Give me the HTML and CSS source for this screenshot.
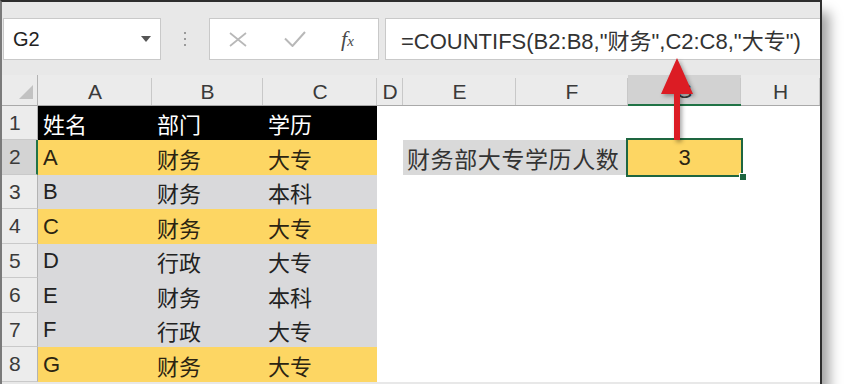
FILE: index.html
```html
<!DOCTYPE html>
<html lang="zh-CN">
<head>
<meta charset="utf-8">
<title>COUNTIFS</title>
<link rel="stylesheet" href="styles.css">
</head>
<body>
<div class="window">
  <div class="formula-bar">
    <div class="name-box"><span>G2</span><span class="dd"></span></div>
    <div class="grip"><i></i><i></i><i></i></div>
    <div class="fx-box">
      <svg class="ico-x" width="18" height="15" viewBox="0 0 18 15"><path d="M1 1 L17 14 M17 1 L1 14" stroke="#b8b8b8" stroke-width="1.7" fill="none"/></svg>
      <svg class="ico-ok" width="22" height="16" viewBox="0 0 22 16"><path d="M1 7.5 L8.5 15 L21 1" stroke="#b8b8b8" stroke-width="2" fill="none"/></svg>
      <span class="fx">f<span class="fx-x">x</span></span>
    </div>
    <div class="formula">=COUNTIFS(B2:B8,"财务",C2:C8,"大专")</div>
  </div>

  <div class="sheet">
    <div class="corner"></div>
    <div class="colh">A</div>
    <div class="colh">B</div>
    <div class="colh">C</div>
    <div class="colh">D</div>
    <div class="colh">E</div>
    <div class="colh">F</div>
    <div class="colh sel">G</div>
    <div class="colh">H</div>

    <div class="rowh">1</div>
    <div class="c k">姓名</div><div class="c k">部门</div><div class="c k">学历</div>
    <div class="c"></div><div class="c"></div><div class="c"></div><div class="c"></div><div class="c"></div>

    <div class="rowh sel">2</div>
    <div class="c y">A</div><div class="c y">财务</div><div class="c y">大专</div>
    <div class="c"></div>
    <div class="c label">财务部大专学历人数</div>
    <div class="c active">3</div>
    <div class="c"></div>

    <div class="rowh">3</div>
    <div class="c g">B</div><div class="c g">财务</div><div class="c g">本科</div>
    <div class="c"></div><div class="c"></div><div class="c"></div><div class="c"></div><div class="c"></div>

    <div class="rowh">4</div>
    <div class="c y">C</div><div class="c y">财务</div><div class="c y">大专</div>
    <div class="c"></div><div class="c"></div><div class="c"></div><div class="c"></div><div class="c"></div>

    <div class="rowh">5</div>
    <div class="c g">D</div><div class="c g">行政</div><div class="c g">大专</div>
    <div class="c"></div><div class="c"></div><div class="c"></div><div class="c"></div><div class="c"></div>

    <div class="rowh">6</div>
    <div class="c g">E</div><div class="c g">财务</div><div class="c g">本科</div>
    <div class="c"></div><div class="c"></div><div class="c"></div><div class="c"></div><div class="c"></div>

    <div class="rowh">7</div>
    <div class="c g">F</div><div class="c g">行政</div><div class="c g">大专</div>
    <div class="c"></div><div class="c"></div><div class="c"></div><div class="c"></div><div class="c"></div>

    <div class="rowh">8</div>
    <div class="c y">G</div><div class="c y">财务</div><div class="c y">大专</div>
    <div class="c"></div><div class="c"></div><div class="c"></div><div class="c"></div><div class="c"></div>
  </div>

  <svg class="arrow" width="60" height="90" viewBox="0 0 60 90">
    <polygon points="27,4 43,40 30,40 30,86 24,86 24,40 11,40" fill="#dc1c24"/>
  </svg>
</div>
</body>
</html>
```

FILE: styles.css
```css
html, body {
  margin: 0;
  padding: 0;
  background: #ffffff;
}

body {
  font-family: "Liberation Sans", "Noto Sans CJK SC", sans-serif;
}

.window {
  position: relative;
  width: 818px;
  height: 382px;
  border-top: 2px solid #2e2e2e;
  border-left: 2px solid #7a7a7a;
  border-right: 2px solid #2e2e2e;
  background: #e8e8e8;
  box-shadow: 7px 12px 12px rgba(0, 0, 0, 0.38);
  overflow: hidden;
}

/* ---------- formula bar ---------- */
.formula-bar {
  display: flex;
  height: 42px;
  padding-top: 16px;
}

.name-box {
  margin-left: 1px;
  width: 158px;
  box-sizing: border-box;
  background: #ffffff;
  border: 1px solid #c9c9c9;
  display: flex;
  align-items: center;
  justify-content: space-between;
  padding: 0 9px 0 9px;
  font-size: 20px;
  color: #222222;
}

.dd {
  width: 0;
  height: 0;
  border-left: 5px solid transparent;
  border-right: 5px solid transparent;
  border-top: 6px solid #555555;
}

.grip {
  width: 48px;
  display: flex;
  flex-direction: column;
  align-items: center;
  justify-content: center;
  gap: 4px;
}

.grip i {
  display: block;
  width: 2px;
  height: 2px;
  background: #9a9a9a;
}

.fx-box {
  width: 170px;
  box-sizing: border-box;
  background: #ffffff;
  border: 1px solid #c9c9c9;
  display: flex;
  align-items: center;
  padding-left: 19px;
}

.ico-ok {
  margin-left: 37px;
}

.fx {
  margin-left: 35px;
  font-family: "Liberation Serif", "DejaVu Serif", serif;
  font-style: italic;
  font-size: 22px;
  color: #4a4a4a;
  line-height: 1;
}

.fx-x {
  font-size: 15px;
}

.formula {
  flex: 1;
  margin-left: 6px;
  background: #ffffff;
  border: 1px solid #c9c9c9;
  border-right: none;
  display: flex;
  align-items: center;
  padding-left: 15px;
  font-size: 22px;
  color: #333333;
  white-space: nowrap;
}

/* ---------- sheet grid ---------- */
.sheet {
  margin-top: 15px;
  display: grid;
  grid-template-columns: 36px 114px 111px 114px 26px 113px 112px 113px 79px;
  grid-template-rows: 31px 34px 35px 34px 35px 34px 35px 34px 35px;
  background: #ffffff;
}

.corner {
  background: #ebebeb;
  border-right: 1px solid #b3b3b3;
  border-bottom: 1px solid #a9a9a9;
  display: flex;
  align-items: flex-end;
  justify-content: flex-end;
  padding: 0 4px 6px 0;
}

.corner::after {
  content: "";
  width: 0;
  height: 0;
  border-left: 14px solid transparent;
  border-bottom: 14px solid #c2c2c2;
}

.colh {
  background-color: #ebebeb;
  background-image: linear-gradient(#c8c8c8, #c8c8c8);
  background-size: 1px calc(100% - 3px);
  background-position: right bottom;
  background-repeat: no-repeat;
  border-bottom: 1px solid #a9a9a9;
  display: flex;
  align-items: center;
  justify-content: center;
  padding-top: 3px;
  font-size: 21px;
  color: #3a3a3a;
}

.colh.sel {
  background-color: #d2d2d2;
  border-bottom: 2px solid #217346;
}

.rowh {
  background: #ececec;
  border-right: 1px solid #b3b3b3;
  border-bottom: 1px solid #c9c9c9;
  display: flex;
  align-items: center;
  padding-left: 7px;
  font-size: 21px;
  color: #3a3a3a;
}

.rowh.sel {
  background: #d3d3d3;
  border-right: 2px solid #217346;
}

.c {
  display: flex;
  align-items: center;
  padding-left: 5px;
  font-size: 22px;
  color: #222222;
  white-space: nowrap;
  min-width: 0;
}

.k {
  background: #000000;
  color: #ffffff;
}

.y {
  background: #fdd663;
  color: #2b2412;
}

.g {
  background: #d9d9db;
}

.label {
  grid-column: span 2;
  background: #d9d9d9;
  padding-left: 4px;
  font-size: 23px;
  letter-spacing: 0.6px;
  color: #333333;
}

.active {
  position: relative;
  justify-content: center;
  padding-left: 0;
  background: #fdd663;
  color: #2b2412;
  outline: 2px solid #1e6640;
}

.active::after {
  content: "";
  position: absolute;
  right: -6px;
  bottom: -6px;
  width: 6px;
  height: 6px;
  background: #1e6640;
  border: 1px solid #ffffff;
}

/* ---------- annotation arrow ---------- */
.arrow {
  position: absolute;
  left: 648px;
  top: 52px;
  filter: drop-shadow(2px 2px 2px rgba(0, 0, 0, 0.35));
}
```
